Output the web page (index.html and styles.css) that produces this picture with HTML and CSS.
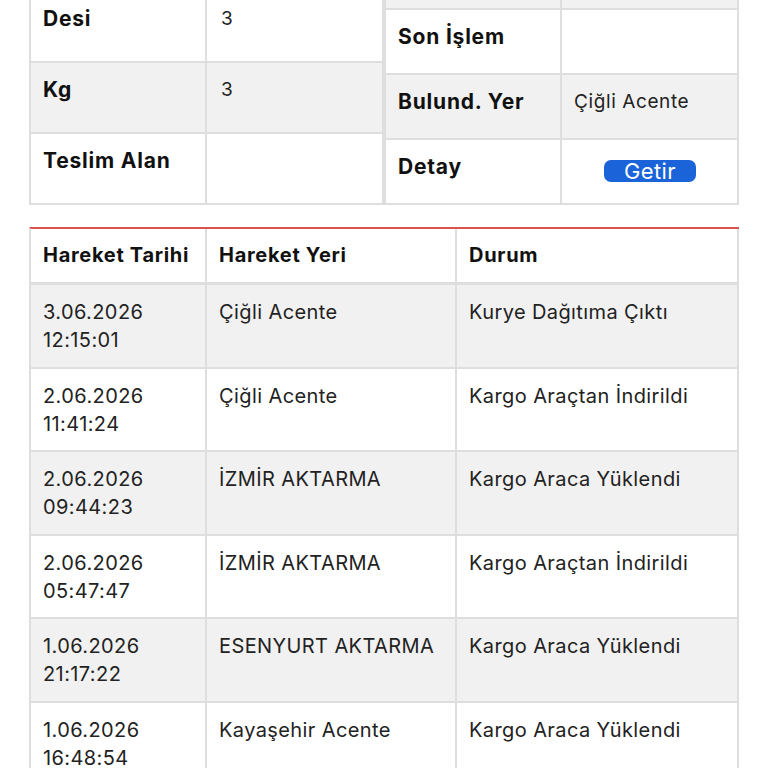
FILE: index.html
```html
<!DOCTYPE html>
<html lang="tr">
<head>
<meta charset="utf-8">
<title>Kargo Takip</title>
<link rel="stylesheet" href="styles.css">
</head>
<body>
<div class="page">
  <div class="summary">
    <table class="info info-left">
      <colgroup><col class="c-label"><col class="c-value"></colgroup>
      <tr class="row-white"><th>Desi</th><td>3</td></tr>
      <tr class="row-gray"><th>Kg</th><td>3</td></tr>
      <tr class="row-white"><th>Teslim Alan</th><td></td></tr>
    </table>
    <table class="info info-right">
      <colgroup><col class="c-label"><col class="c-value"></colgroup>
      <tr class="row-gray"><th></th><td></td></tr>
      <tr class="row-white"><th>Son İşlem</th><td></td></tr>
      <tr class="row-gray"><th>Bulund. Yer</th><td>Çiğli Acente</td></tr>
      <tr class="row-white"><th>Detay</th><td class="btn-cell"><button class="btn-getir" type="button">Getir</button></td></tr>
    </table>
  </div>

  <table class="moves">
    <colgroup><col class="m-date"><col class="m-place"><col class="m-state"></colgroup>
    <thead>
      <tr><th>Hareket Tarihi</th><th>Hareket Yeri</th><th>Durum</th></tr>
    </thead>
    <tbody>
      <tr class="row-gray"><td>3.06.2026<br>12:15:01</td><td>Çiğli Acente</td><td>Kurye Dağıtıma Çıktı</td></tr>
      <tr class="row-white"><td>2.06.2026<br>11:41:24</td><td>Çiğli Acente</td><td>Kargo Araçtan İndirildi</td></tr>
      <tr class="row-gray"><td>2.06.2026<br>09:44:23</td><td>İZMİR AKTARMA</td><td>Kargo Araca Yüklendi</td></tr>
      <tr class="row-white"><td>2.06.2026<br>05:47:47</td><td>İZMİR AKTARMA</td><td>Kargo Araçtan İndirildi</td></tr>
      <tr class="row-gray"><td>1.06.2026<br>21:17:22</td><td>ESENYURT AKTARMA</td><td>Kargo Araca Yüklendi</td></tr>
      <tr class="row-white"><td>1.06.2026<br>16:48:54</td><td>Kayaşehir Acente</td><td>Kargo Araca Yüklendi</td></tr>
    </tbody>
  </table>
</div>
</body>
</html>
```

FILE: styles.css
```css
html, body {
  margin: 0;
  padding: 0;
  background: #ffffff;
}

body {
  font-family: "Inter", "Liberation Sans", "Noto Sans", sans-serif;
  color: #1a1a1a;
  overflow: hidden;
}

.page {
  padding: 0 29px;
}

.summary {
  display: flex;
  align-items: flex-end;
  height: 205px;
  overflow: hidden;
}

.info {
  width: 355px;
  flex: 0 0 355px;
  border-spacing: 0;
  table-layout: fixed;
  border-left: 2px solid #dedede;
  border-top: 2px solid #dedede;
}

.info .c-label {
  width: 176px;
}

.info th,
.info td {
  border-right: 2px solid #dedede;
  border-bottom: 2px solid #dedede;
  padding: 15px 12px 0 12px;
  vertical-align: top;
  text-align: left;
  line-height: 24px;
  box-sizing: border-box;
}

.info th {
  font-weight: 700;
  font-size: 21px;
  letter-spacing: 0.8px;
  color: #111111;
}

.info td {
  font-size: 19px;
  letter-spacing: 0.6px;
  color: #222222;
  padding-left: 14px;
}

.info-left tr {
  height: 71px;
}

.info-right tr {
  height: 65px;
}

.info-right tr:first-child {
  height: 67px;
}

.info-right td {
  padding-left: 12px;
}

.row-white {
  background: #ffffff;
}

.row-gray {
  background: #f1f1f1;
}

.btn-cell {
  text-align: left;
}

.info td.btn-cell {
  padding-top: 20px;
  padding-left: 42px;
}

.btn-getir {
  display: block;
  width: 92px;
  height: 22px;
  padding: 0;
  border: none;
  border-radius: 7px;
  background: #1a63d8;
  color: #ffffff;
  font-family: "Inter", "Liberation Sans", sans-serif;
  font-size: 22px;
  letter-spacing: 0.4px;
  line-height: 22px;
  text-align: center;
}

.moves {
  width: 710px;
  margin-top: 22px;
  border-spacing: 0;
  table-layout: fixed;
  border-top: 2px solid #d9534f;
  border-left: 2px solid #dedede;
}

.moves .m-date {
  width: 176px;
}

.moves .m-place {
  width: 250px;
}

.moves th,
.moves td {
  border-right: 2px solid #dedede;
  border-bottom: 2px solid #dedede;
  text-align: left;
  vertical-align: top;
  box-sizing: border-box;
  font-size: 20px;
  line-height: 28px;
}

.moves th {
  height: 56px;
  padding: 12px 12px 0 12px;
  font-weight: 700;
  letter-spacing: 0.7px;
  color: #111111;
  background: #ffffff;
  border-bottom-width: 3px;
}

.moves td {
  height: 83.5px;
  padding: 13px 12px 0 12px;
  font-weight: 400;
  letter-spacing: 0.4px;
  color: #222222;
}
```
